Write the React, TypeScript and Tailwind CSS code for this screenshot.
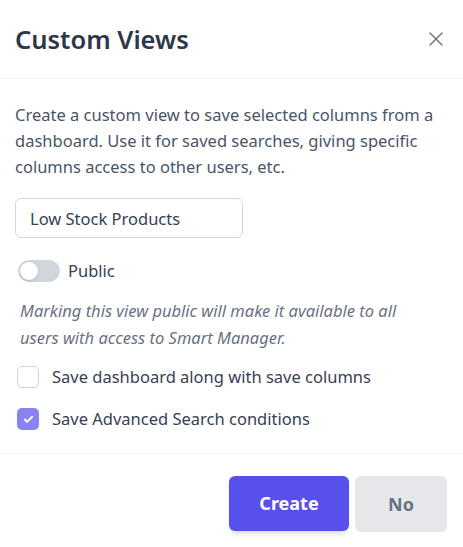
import React, { useState } from 'react';
import { X, Check } from 'lucide-react';

const App: React.FC = () => {
  const [name, setName] = useState('Low Stock Products');
  const [isPublic, setIsPublic] = useState(false);
  const [saveDashboard, setSaveDashboard] = useState(false);
  const [saveSearch, setSaveSearch] = useState(true);

  return (
    <div className="w-[463px] h-[547px] bg-white font-['Noto_Sans',sans-serif] text-gray-600">
      {/* header */}
      <div className="h-[79px] flex items-center justify-between pl-[15px] pr-[15px] border-b border-gray-100">
        <h1 className="text-[25.5px] font-semibold text-[#2d3748] leading-8">Custom Views</h1>
        <button className="text-gray-500">
          <X className="w-[24px] h-[24px]" strokeWidth={1.4} />
        </button>
      </div>

      {/* body */}
      <div className="px-[15px] pt-[23px] pb-[23px] border-b border-gray-100">
        <p className="text-[16.5px] leading-[26px] text-[#4a5568]">
          Create a custom view to save selected columns from a dashboard. Use it for saved searches, giving specific
          columns access to other users, etc.
        </p>

        <input
          value={name}
          onChange={(e) => setName(e.target.value)}
          className="mt-[18px] w-[228px] h-[40px] px-[14px] rounded-md border border-gray-300 text-[16.5px] text-[#374151] outline-none"
        />

        <div className="mt-[22px] flex items-center gap-[8px] pl-[3px]">
          <button
            onClick={() => setIsPublic(!isPublic)}
            className={`relative w-[42px] h-[22px] rounded-full border border-gray-300 ${isPublic ? 'bg-[#5850ec]' : 'bg-gray-300'}`}
          >
            <span
              className={`absolute top-[1px] w-[18px] h-[18px] rounded-full bg-white shadow ${isPublic ? 'left-[21px]' : 'left-[1px]'}`}
            />
          </button>
          <span className="text-[16.5px] leading-[22px] text-[#374151]">Public</span>
        </div>

        <p className="mt-[15px] pl-[5px] max-w-[410px] text-[16.5px] leading-[27px] italic text-gray-500">
          Marking this view public will make it available to all users with access to Smart Manager.
        </p>

        <div className="mt-[15px] flex flex-col gap-[20px] pl-[2px]">
          <label className="flex items-center gap-[13px] cursor-pointer">
            <span
              onClick={() => setSaveDashboard(!saveDashboard)}
              className={`w-[22px] h-[22px] rounded-[5px] flex items-center justify-center ${saveDashboard ? 'bg-[#8983f0]' : 'border border-gray-300 bg-white'}`}
            >
              {saveDashboard && <Check className="w-[11px] h-[11px] text-white" strokeWidth={4} />}
            </span>
            <span className="text-[16.5px] leading-[22px] text-[#374151]">Save dashboard along with save columns</span>
          </label>
          <label className="flex items-center gap-[13px] cursor-pointer">
            <span
              onClick={() => setSaveSearch(!saveSearch)}
              className={`w-[22px] h-[22px] rounded-[5px] flex items-center justify-center ${saveSearch ? 'bg-[#8983f0]' : 'border border-gray-300 bg-white'}`}
            >
              {saveSearch && <Check className="w-[11px] h-[11px] text-white" strokeWidth={4} />}
            </span>
            <span className="text-[16.5px] leading-[22px] text-[#374151]">Save Advanced Search conditions</span>
          </label>
        </div>
      </div>

      {/* footer */}
      <div className="flex justify-end gap-[6px] pt-[22px] pr-[16px]">
        <button className="w-[120px] h-[55px] rounded-md bg-[#5850ec] text-white text-[18px] font-bold shadow-md">
          Create
        </button>
        <button className="w-[92px] h-[56px] rounded-md bg-gray-200 text-gray-500 text-[18px] font-bold">
          No
        </button>
      </div>
    </div>
  );
};

export default App;
